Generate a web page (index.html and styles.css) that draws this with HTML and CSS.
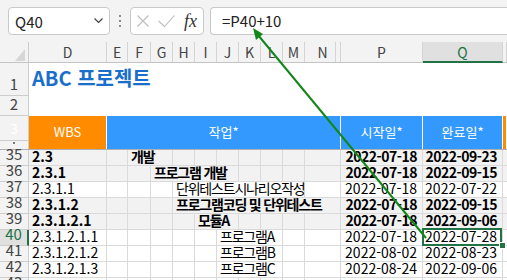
FILE: index.html
```html
<!DOCTYPE html>
<html lang="ko">
<head>
    <meta charset="UTF-8">
    <title>ABC 프로젝트</title>
    <link rel="stylesheet" href="styles.css">
</head>
<body>
    <div class="toolbar">
        <div class="namebox">
            <span>Q40</span>
            <svg width="9" height="6" viewBox="0 0 9 6"><polyline points="0.5,0.5 4.5,4.5 8.5,0.5" fill="none" stroke="#444" stroke-width="1.2"/></svg>
        </div>
        <div class="grip"><i></i><i></i><i></i></div>
        <div class="fbtns">
            <svg class="x" width="12" height="12" viewBox="0 0 12 12"><path d="M0.5 0.5L11.5 11.5M11.5 0.5L0.5 11.5" stroke="#bdbdbd" stroke-width="1.1"/></svg>
            <svg class="ok" width="17" height="12" viewBox="0 0 17 12"><path d="M0.5 6L6.5 11.5L16.5 0.5" fill="none" stroke="#bdbdbd" stroke-width="1.1"/></svg>
            <span class="fx">fx</span>
        </div>
        <div class="formula">=P40+10</div>
    </div>

    <div class="sheet">
        <div class="row colhdr">
            <div class="corner"><svg width="28" height="20" viewBox="0 0 28 20"><polygon points="15,19 25,7 25,19" fill="#d6d6d6"/></svg></div>
            <div>D</div><div>E</div><div>F</div><div>G</div><div>H</div><div>I</div><div>J</div><div>K</div><div>L</div><div>M</div><div class="hid">N</div><div>P</div><div class="sel">Q</div><div></div>
        </div>

        <div class="row top r1">
            <div class="rh">1</div>
            <div class="title">ABC 프로젝트</div>
        </div>
        <div class="row top r2">
            <div class="rh">2</div>
            <div class="blank"></div>
        </div>

        <div class="row head">
            <div class="rh split"><span class="n3">3</span><span class="n4"><i></i></span></div>
            <div class="orange">WBS</div>
            <div class="blue s10">작업*</div>
            <div class="blue">시작일*</div>
            <div class="blue">완료일*</div>
            <div class="orange"></div>
        </div>
        <div class="freeze"></div>

        <div class="row data g">
            <div class="rh">35</div>
            <div>2.3</div><div></div>
            <div class="k s2">개발</div>
            <div></div><div></div><div></div><div></div><div></div><div></div><div></div>
            <div class="num">2022-07-18</div><div class="num">2022-09-23</div><div></div>
        </div>
        <div class="row data g">
            <div class="rh">36</div>
            <div>2.3.1</div><div></div><div></div>
            <div class="k s4">프로그램 개발</div>
            <div></div><div></div><div></div><div></div>
            <div class="num">2022-07-18</div><div class="num">2022-09-15</div><div></div>
        </div>
        <div class="row data">
            <div class="rh">37</div>
            <div>2.3.1.1</div><div></div><div></div><div></div>
            <div class="k s6">단위테스트시나리오작성</div>
            <div></div>
            <div class="num">2022-07-18</div><div class="num">2022-07-22</div><div></div>
        </div>
        <div class="row data g">
            <div class="rh">38</div>
            <div>2.3.1.2</div><div></div><div></div><div></div>
            <div class="k s7">프로그램코딩 및 단위테스트</div>
            <div class="num">2022-07-18</div><div class="num">2022-09-15</div><div></div>
        </div>
        <div class="row data g">
            <div class="rh">39</div>
            <div>2.3.1.2.1</div><div></div><div></div><div></div><div></div>
            <div class="k s2">모듈A</div>
            <div></div><div></div><div></div><div></div>
            <div class="num">2022-07-18</div><div class="num">2022-09-06</div><div></div>
        </div>
        <div class="row data">
            <div class="rh cur">40</div>
            <div>2.3.1.2.1.1</div><div></div><div></div><div></div><div></div><div></div>
            <div class="k s3">프로그램A</div>
            <div></div><div></div>
            <div class="num">2022-07-18</div><div class="num active">2022-07-28</div><div></div>
        </div>
        <div class="row data">
            <div class="rh">41</div>
            <div>2.3.1.2.1.2</div><div></div><div></div><div></div><div></div><div></div>
            <div class="k s3">프로그램B</div>
            <div></div><div></div>
            <div class="num">2022-08-02</div><div class="num">2022-08-23</div><div></div>
        </div>
        <div class="row data">
            <div class="rh">42</div>
            <div>2.3.1.2.1.3</div><div></div><div></div><div></div><div></div><div></div>
            <div class="k s3">프로그램C</div>
            <div></div><div></div>
            <div class="num">2022-08-24</div><div class="num">2022-09-06</div><div></div>
        </div>
        <div class="row data">
            <div class="rh">43</div>
            <div></div><div></div><div></div><div></div><div></div><div></div><div></div><div></div><div></div><div></div><div></div><div></div><div></div><div></div>
        </div>
    </div>

    <svg class="arrow" width="507" height="280" viewBox="0 0 507 280">
        <line x1="426" y1="238" x2="258" y2="35" stroke="#13861a" stroke-width="2"/>
        <polygon points="253,28 256,40 263,34" fill="#13861a"/>
    </svg>
</body>
</html>
```

FILE: styles.css
```css
body {
    margin: 0;
    width: 507px;
    height: 280px;
    overflow: hidden;
    position: relative;
    font-family: "Noto Sans CJK KR", sans-serif;
    background-color: #fff;
    color: #000;
}

/* formula bar */
.toolbar {
    height: 42px;
    box-sizing: border-box;
    padding-top: 7px;
    display: flex;
    background-color: #f3f3f3;
}

.namebox {
    margin-left: 8px;
    width: 102px;
    height: 28px;
    box-sizing: border-box;
    border: 1px solid #c9c9c9;
    border-radius: 4px;
    background-color: #fff;
    display: flex;
    align-items: center;
    justify-content: space-between;
    padding: 0 6px 0 6px;
    font-size: 15px;
    color: #222;
}

.grip {
    width: 20px;
    height: 28px;
    display: flex;
    flex-direction: column;
    align-items: center;
    justify-content: center;
    gap: 3px;
}

.grip i {
    width: 2px;
    height: 2px;
    background-color: #8a8a8a;
}

.fbtns {
    width: 74px;
    height: 28px;
    box-sizing: border-box;
    border: 1px solid #c9c9c9;
    border-radius: 4px;
    background-color: #fff;
    display: flex;
    align-items: center;
    padding-left: 6px;
}

.fbtns .ok {
    margin-left: 9px;
}

.fx {
    margin-left: 9px;
    font-family: "Liberation Serif", serif;
    font-style: italic;
    font-size: 18px;
    color: #333;
    line-height: 18px;
}

.formula {
    margin-left: 6px;
    flex: 1;
    height: 28px;
    box-sizing: border-box;
    border: 1px solid #c9c9c9;
    border-right: none;
    border-radius: 4px 0 0 4px;
    background-color: #fff;
    padding-left: 11px;
    font-size: 15px;
    line-height: 26px;
    color: #222;
}

/* grid */
.row {
    display: grid;
    grid-template-columns: 29px 78px 21px 23px 22px 22px 22px 22px 22px 22px 22px 36px 82px 80px 1fr;
}

.row > div {
    box-sizing: border-box;
    border-right: 1px solid #dadada;
    border-bottom: 1px solid #dadada;
    white-space: nowrap;
}

.rh {
    background-color: #f3f3f3;
    border-color: #cdcdcd !important;
    color: #444;
    font-size: 15px;
    display: flex;
    justify-content: center;
    align-items: flex-end;
    line-height: 22px;
}

.colhdr {
    grid-template-rows: 21px;
    background-color: #f3f3f3;
}

.colhdr > div {
    border-color: #d4d4d4;
    border-bottom-color: #c4c4c4;
    text-align: center;
    font-size: 14px;
    line-height: 20px;
    color: #444;
}

.colhdr .corner {
    border-right-color: #cdcdcd;
}

.colhdr .corner svg {
    display: block;
}

.colhdr .hid {
    box-shadow: inset -4px 0 0 #f3f3f3, inset -5px 0 0 #d4d4d4;
}

.colhdr .sel {
    background-color: #e0e0e0;
    border-bottom: 2px solid #217346;
    color: #217346;
}

.top > div {
    border-right: none;
    border-bottom: none;
}

.top .rh {
    border-right: 1px solid #cdcdcd;
    border-bottom: 1px solid #cdcdcd;
}

.r1 {
    grid-template-rows: 33px;
}

.r2 {
    grid-template-rows: 20px;
}

.title,
.blank {
    grid-column: span 14;
}

.title {
    padding: 3px 0 0 3px;
    font-size: 20px;
    font-weight: bold;
    line-height: 24px;
    color: #1a6fca;
}

/* header block (rows 3-4) */
.head {
    grid-template-rows: 33px;
}

.head > div {
    border-right: 1px solid #fff;
    border-bottom: none;
    color: #fff;
    font-size: 13px;
    display: flex;
    align-items: center;
    justify-content: center;
    padding-bottom: 3px;
}

.head .split {
    flex-direction: column;
    align-items: stretch;
    justify-content: flex-start;
    padding-bottom: 0;
    border-right: 1px solid #cdcdcd;
}

.n3 {
    height: 25px;
    box-sizing: border-box;
    border-bottom: 1px solid #cdcdcd;
    display: flex;
    justify-content: center;
    align-items: flex-end;
    line-height: 22px;
}

.n4 {
    display: flex;
    justify-content: center;
    padding-top: 1px;
}

.n4 i {
    width: 2px;
    height: 2px;
    background-color: #777;
}

.orange {
    background-color: #ff8c00;
}

.blue {
    background-color: #3399ff;
}

.freeze {
    height: 1px;
    background-color: #b0b0b0;
}

/* data rows */
.data {
    grid-template-rows: 16px;
    font-size: 14px;
}

.data > div {
    display: flex;
    align-items: flex-end;
    line-height: 18px;
    padding: 0 3px;
}

.data .rh {
    padding: 0;
    line-height: 22px;
}

.g > div {
    background-color: #f2f2f2;
    font-weight: bold;
}

.g > .rh {
    font-weight: normal;
    background-color: #f3f3f3;
}

.k {
    letter-spacing: -1.2px;
}

.num {
    justify-content: flex-end;
    padding-right: 5px !important;
}

.g > .num {
    letter-spacing: -0.5px;
}

.s2 { grid-column: span 2; }
.s3 { grid-column: span 3; }
.s4 { grid-column: span 4; }
.s6 { grid-column: span 6; }
.s7 { grid-column: span 7; }
.s10 { grid-column: span 10; }

.rh.cur {
    background-color: #e0e0e0;
    color: #217346;
    border-right: 2px solid #217346 !important;
}

.active {
    position: relative;
}

.active::after {
    content: "";
    position: absolute;
    top: -2px;
    left: -1px;
    right: 0;
    bottom: -1px;
    border: 2px solid #217346;
}

.active::before {
    content: "";
    position: absolute;
    right: -4px;
    bottom: -4px;
    width: 5px;
    height: 5px;
    background-color: #217346;
    border: 1px solid #fff;
    z-index: 1;
}

.arrow {
    position: absolute;
    top: 0;
    left: 0;
    pointer-events: none;
}
```
